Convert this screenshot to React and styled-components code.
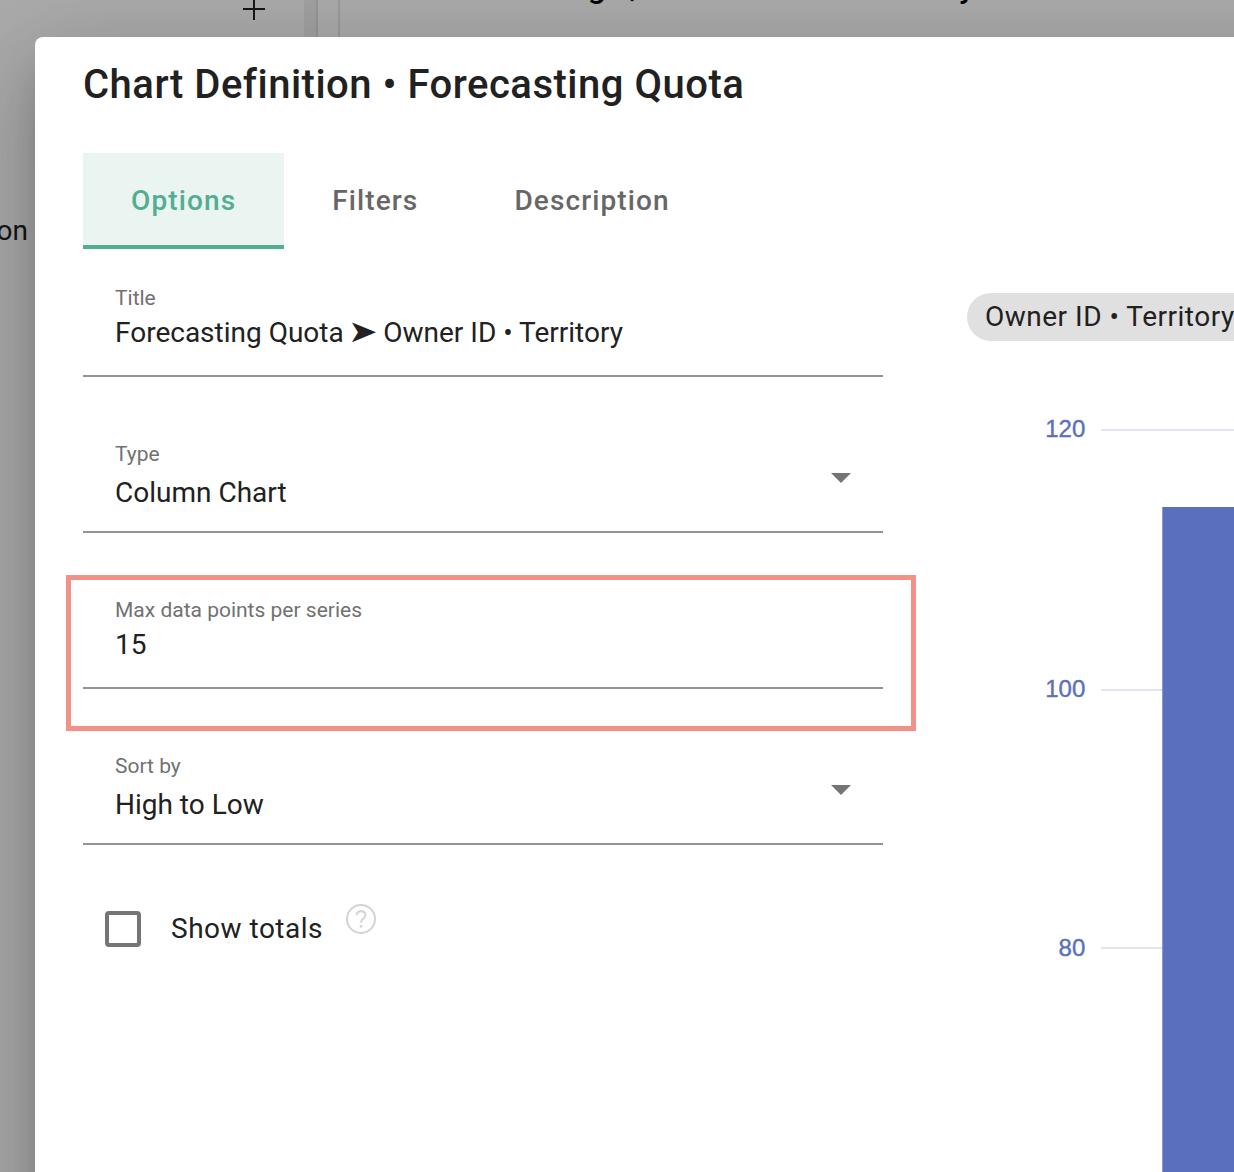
import React, { useState } from "react";
import styled, { createGlobalStyle, css } from "styled-components";

const GlobalStyle = createGlobalStyle`
  *, *::before, *::after { box-sizing: border-box; }
  html, body { margin: 0; padding: 0; overflow: hidden; }
  body { font-family: Roboto, "Liberation Sans", "DejaVu Sans", sans-serif; color: #212121; background: #fff; }
`;

const Screen = styled.div`
  position: relative;
  width: 1234px;
  height: 1172px;
  overflow: hidden;
`;

const Page = styled.div`
  display: flex;
  height: 100%;
  background: #fcfcfc;
`;

const Sidebar = styled.aside`
  width: 304px;
  display: flex;
  flex-direction: column;
  overflow: hidden;
`;

const SidebarHead = styled.div`
  display: flex;
  justify-content: flex-end;
  height: 20px;
  padding-right: 39px;
`;

const SidebarItem = styled.div`
  width: 28px;
  margin-top: 195px;
  display: flex;
  justify-content: flex-end;
  font-size: 28px;
  line-height: 32px;
  white-space: nowrap;
`;

const ScrollTrack = styled.div`
  width: 14px;
  background: #ededed;
  border-right: 2px solid #dcdcdc;
`;

const Main = styled.main`
  flex: 1;
  margin-left: 20px;
  border-left: 2px solid #e4e4e4;
`;

const PageHeading = styled.div`
  margin-top: -29px;
  padding-left: 94px;
  font-size: 32px;
  font-weight: 500;
  line-height: 32px;
  letter-spacing: 0.3px;
  white-space: nowrap;
  color: #000;
`;

const Backdrop = styled.div`
  position: absolute;
  inset: 0;
  display: flex;
  padding: 37px 0 0 35px;
  background: rgba(0, 0, 0, 0.32);
`;

const Dialog = styled.section`
  flex: none;
  width: 2200px;
  height: 2000px;
  padding: 18px 48px;
  border-radius: 8px;
  background: #fff;
  box-shadow: 0 22px 30px -14px rgba(0, 0, 0, 0.2), 0 48px 76px 6px rgba(0, 0, 0, 0.14),
    0 18px 92px 16px rgba(0, 0, 0, 0.12);
`;

const Heading = styled.h2`
  margin: 0 0 38px;
  font-size: 40px;
  font-weight: 500;
  line-height: 60px;
  letter-spacing: 0.5px;
`;

const Tabs = styled.nav`
  display: flex;
  height: 96px;
`;

const Tab = styled.button`
  border: 0;
  padding: 0 48px;
  background: transparent;
  font: 500 28px/94px Roboto, sans-serif;
  letter-spacing: 1.12px;
  color: #676767;
  ${(p) =>
    p.$active &&
    css`
      color: #52ae91;
      background: #eaf4f1;
      box-shadow: inset 0 -4px #52ae91;
    `}
`;

const Columns = styled.div`
  display: flex;
  gap: 84px;
`;

const Form = styled.div`
  width: 800px;
  padding-top: 16px;
  display: flex;
  flex-direction: column;
  gap: 44px;
`;

const Field = styled.div`
  position: relative;
  height: 112px;
  padding: 21px 32px 0;
  border-bottom: 2px solid #939393;
`;

const Label = styled.div`
  font-size: 21px;
  line-height: 24px;
  color: #717171;
`;

const Value = styled.div`
  display: flex;
  justify-content: space-between;
  margin-top: ${(p) => (p.$select ? 11 : 7)}px;
  font-size: 28px;
  line-height: 32px;
  white-space: pre;
`;

const Arrow = styled.span`
  display: inline-flex;
  justify-content: center;
  width: 25.6px;
  font-size: 31px;
  line-height: 0;
  transform: translate(-1px, 0) scaleX(1.14);
`;

const Caret = styled.span`
  width: 20px;
  height: 10px;
  margin-top: -4px;
  background: #757575;
  clip-path: polygon(0 0, 100% 0, 50% 100%);
`;

const Highlight = styled.div`
  position: absolute;
  inset: -2px -33px -44px -17px;
  border: 5px solid #f19187;
  pointer-events: none;
`;

const CheckRow = styled.label`
  display: flex;
  align-items: flex-start;
  margin-top: 15px;
  padding-left: 22px;
`;

const Box = styled.span`
  width: 36px;
  height: 36px;
  margin-top: 7px;
  border: 4px solid #757575;
  border-radius: 4px;
`;

const CheckText = styled.span`
  margin: 9px 0 0 30px;
  font-size: 28px;
  line-height: 32px;
  letter-spacing: 0.5px;
`;

const HelpIcon = styled.svg`
  width: 30px;
  height: 30px;
  margin-left: 23px;
`;

const Preview = styled.div`
  padding-top: 44px;
`;

const Chip = styled.div`
  width: max-content;
  height: 48px;
  padding: 0 24px 0 18px;
  border-radius: 24px;
  background: #e0e0e0;
  font-size: 28px;
  line-height: 47px;
  letter-spacing: 0.5px;
`;

const Chart = styled.svg`
  display: block;
  width: 600px;
  height: 900px;
  font: 24px "Liberation Sans", sans-serif;
  fill: #5b6fbf;
`;

const TICKS = [
  { label: "120", y: 89, baseline: 96 },
  { label: "100", y: 349, baseline: 356 },
  { label: "80", y: 607, baseline: 615 },
];

function FormField({ label, value, select, highlighted }) {
  return (
    <Field>
      <Label>{label}</Label>
      <Value $select={select}>
        <span>{value}</span>
        {select && <Caret />}
      </Value>
      {highlighted && <Highlight />}
    </Field>
  );
}

export default function App() {
  const [tab, setTab] = useState("Options");
  return (
    <Screen>
      <GlobalStyle />
      <Page>
        <Sidebar>
          <SidebarHead>
            <svg width="22" height="20" viewBox="0 0 22 20">
              <path d="M0 9H22M11 0V20" stroke="#212121" strokeWidth="2" fill="none" />
            </svg>
          </SidebarHead>
          <SidebarItem>on</SidebarItem>
        </Sidebar>
        <ScrollTrack />
        <Main>
          <PageHeading>Forecasting Quota • Owner • Territory</PageHeading>
        </Main>
      </Page>
      <Backdrop>
        <Dialog>
          <Heading>Chart Definition • Forecasting Quota</Heading>
          <Tabs>
            {["Options", "Filters", "Description"].map((name) => (
              <Tab key={name} $active={tab === name} onClick={() => setTab(name)}>
                {name}
              </Tab>
            ))}
          </Tabs>
          <Columns>
            <Form>
              <FormField
                label="Title"
                value={
                  <>
                    Forecasting Quota <Arrow>➤</Arrow> Owner ID • Territory
                  </>
                }
              />
              <FormField label="Type" value="Column Chart" select />
              <FormField label="Max data points per series" value="15" highlighted />
              <FormField label="Sort by" value="High to Low" select />
              <CheckRow>
                <Box />
                <CheckText>Show totals</CheckText>
                <HelpIcon viewBox="0 0 30 30" fill="none" stroke="#d3d3d3" strokeWidth="2">
                  <circle cx="15" cy="15" r="14" />
                  <path d="M10.7 11.2C10.7 8.8 12.5 7.2 15 7.2C17.6 7.2 19.4 8.7 19.4 11C19.4 13 18.2 13.8 16.8 15C15.6 16 15 16.8 15 18.8" />
                  <circle cx="15" cy="22.3" r="1.4" fill="#d3d3d3" stroke="none" />
                </HelpIcon>
              </CheckRow>
            </Form>
            <Preview>
              <Chip>Owner ID • Territory</Chip>
              <Chart viewBox="0 0 600 900">
                {TICKS.map(({ label, y, baseline }) => (
                  <g key={label}>
                    <text x="118.3" y={baseline} textAnchor="end" stroke="#5b6fbf" strokeWidth="0.4">
                      {label}
                    </text>
                    <rect x="134" y={y - 1} width="466" height="2" fill="#e1e4f2" />
                  </g>
                ))}
                <rect x="195.3" y="166" width="300" height="734" />
              </Chart>
            </Preview>
          </Columns>
        </Dialog>
      </Backdrop>
    </Screen>
  );
}
